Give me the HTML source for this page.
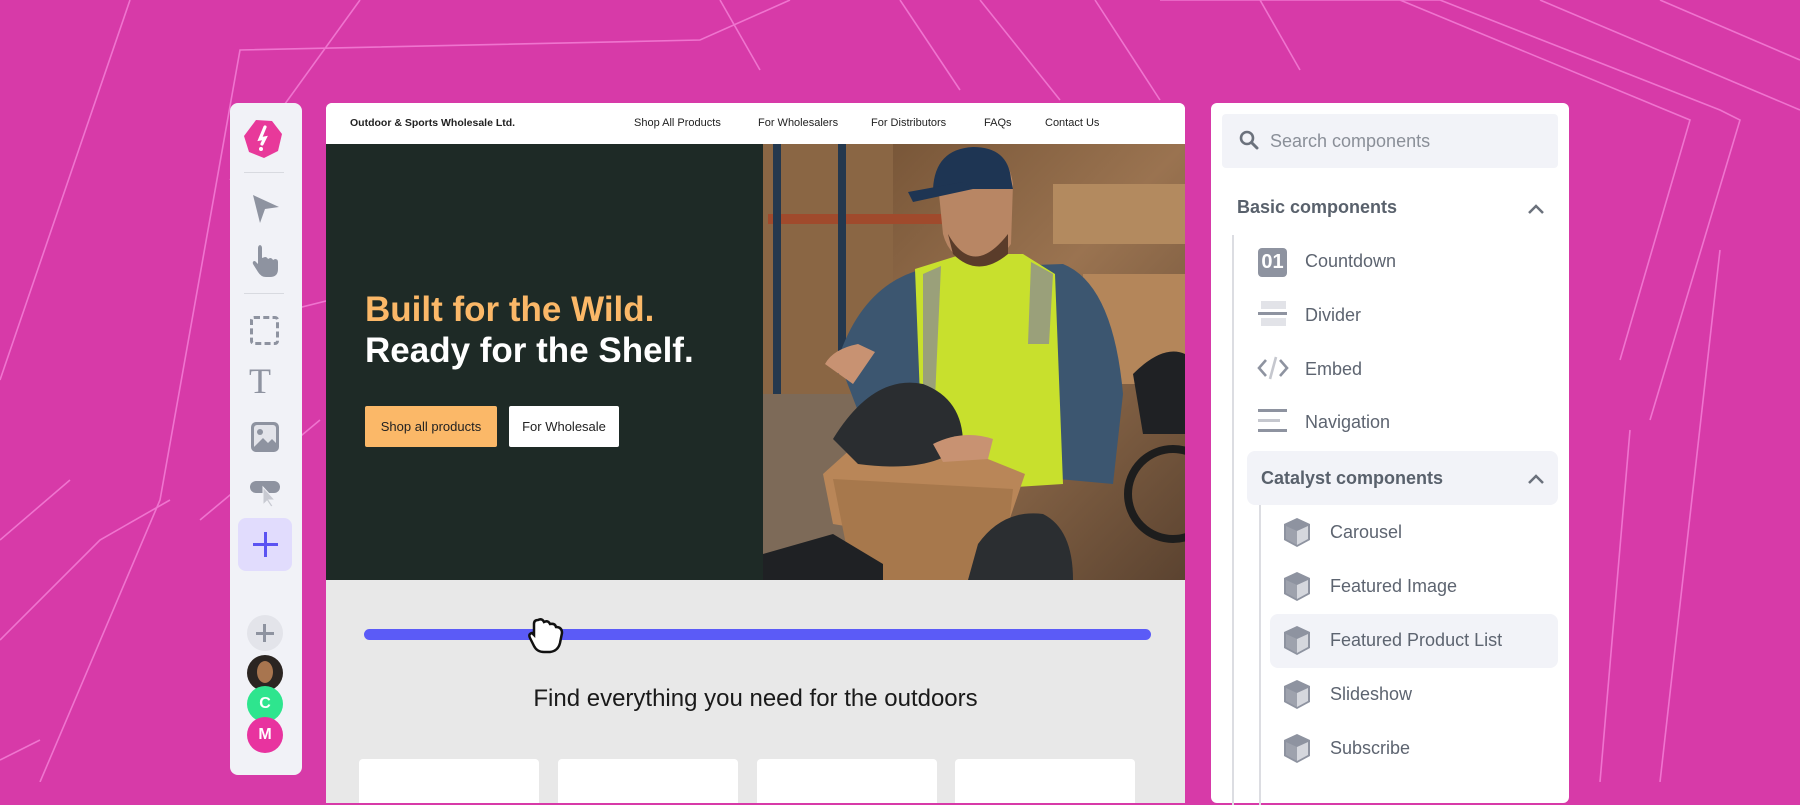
<!DOCTYPE html>
<html><head><meta charset="utf-8"><style>
*{margin:0;padding:0;box-sizing:border-box}
body{width:1800px;height:782px;overflow:hidden;background:#d73aa8;font-family:"Liberation Sans",sans-serif;position:relative}
.abs{position:absolute}
#bg{position:absolute;left:0;top:0}
.tool{position:absolute;left:230px;top:103px;width:72px;height:672px;background:#f1f2f7;border-radius:8px}
.canvas{position:absolute;left:326px;top:103px;width:859px;height:700px;background:#e8e8e8;border-radius:6px 6px 0 0;overflow:hidden}
.nav{height:41px;background:#fff;position:relative;font-size:11px;color:#222}
.nav span{position:absolute;top:14px}
.hero{position:absolute;top:41px;left:0;width:859px;height:436px;background:#1e2a26}
.panel{position:absolute;left:1211px;top:103px;width:358px;height:700px;background:#fff;border-radius:6px}
.item{position:absolute;font-size:18px;color:#5d6470}
.ic{position:absolute}
</style></head><body>
<svg id="bg" width="1800" height="782" fill="none" stroke="#f47fd6" stroke-width="1.6" opacity="0.85">
<polyline points="0,380 130,0"/>
<polyline points="40,782 160,500 240,50 700,40 790,0"/>
<polyline points="0,640 100,540 170,500"/>
<polyline points="0,540 70,480"/>
<polyline points="0,760 40,740"/>
<polyline points="1160,0 1440,0 1720,110 1740,120 1650,420"/>
<polyline points="1400,0 1690,120 1620,360"/>
<polyline points="1540,0 1800,110"/>
<polyline points="1660,0 1800,60"/>
<polyline points="1260,0 1300,70"/>
<polyline points="1630,430 1600,782"/>
<polyline points="1720,250 1660,782"/>
<polyline points="230,180 360,0"/>
<polyline points="200,520 320,420"/>
<polyline points="900,0 960,90"/>
<polyline points="980,0 1060,100"/>
<polyline points="720,0 760,70"/>
<polyline points="1095,0 1160,100"/>
<polyline points="250,320 330,300"/>
</svg>

<div class="tool">
 <svg class="ic" style="left:12px;top:15px" width="42" height="42" viewBox="0 0 42 42"><polygon points="14,2 30,3 40,16 36,33 22,40 7,34 2,18" fill="#e8399a"/><path d="M23 9 L18 21 L23 20 L20 26" stroke="#fff" stroke-width="3.2" fill="none" stroke-linecap="round"/><circle cx="19" cy="31" r="2" fill="#fff"/></svg>
 <div class="abs" style="left:14px;top:69px;width:40px;height:1px;background:#d8dae0"></div>
 <svg class="ic" style="left:21px;top:90px" width="30" height="32" viewBox="0 0 30 32"><path d="M2 2 L28 14 L14 16 L9 30 Z" fill="#8e93a0"/></svg>
 <svg class="ic" style="left:19px;top:140px" width="32" height="34" viewBox="0 0 32 34"><path d="M10 2 q3 0 3 3 v10 l3-1 q2 0 3 2 l2-1 q2 0 3 2 l2-1 q3 0 3 3 v7 q0 8-8 8 h-4 q-5 0-8-5 l-5-8 q-1-3 2-3 l3 3 V5 q0-3 3-3z" fill="#8e93a0"/></svg>
 <div class="abs" style="left:14px;top:190px;width:40px;height:1px;background:#d8dae0"></div>
 <div class="abs" style="left:20px;top:213px;width:29px;height:29px;border:3px dashed #8e93a0;border-radius:4px"></div>
 <div class="abs" style="left:19px;top:260px;font-family:'Liberation Serif',serif;font-size:36px;color:#8e93a0;line-height:36px">T</div>
 <svg class="ic" style="left:20px;top:318px" width="30" height="32" viewBox="0 0 30 32"><rect x="1" y="1" width="28" height="30" rx="5" fill="#8e93a0"/><rect x="4" y="4" width="22" height="24" rx="3" fill="#e3e4ea"/><circle cx="10" cy="11" r="3" fill="#8e93a0"/><path d="M4 26 L13 17 L18 22 L22 18 L26 22 V28 H4Z" fill="#8e93a0"/></svg>
 <svg class="ic" style="left:19px;top:376px" width="34" height="30" viewBox="0 0 34 30"><rect x="1" y="2" width="30" height="12" rx="6" fill="#8e93a0"/><path d="M14 8 L14 26 L18 22 L22 28 L24 27 L20 21 L26 21 Z" fill="#c8cad2" stroke="#f1f2f7" stroke-width="1"/></svg>
 <div class="abs" style="left:8px;top:415px;width:54px;height:53px;background:#e1dcfd;border-radius:8px"></div>
 <div class="abs" style="left:23px;top:440px;width:25px;height:3px;background:#5b53f2"></div>
 <div class="abs" style="left:34px;top:429px;width:3px;height:25px;background:#5b53f2"></div>
 <div class="abs" style="left:17px;top:512px;width:36px;height:36px;border-radius:50%;background:#e3e4ea"></div>
 <div class="abs" style="left:26px;top:529px;width:18px;height:3px;background:#8e93a0"></div>
 <div class="abs" style="left:33px;top:521px;width:3px;height:18px;background:#8e93a0"></div>
 <div class="abs" style="left:17px;top:552px;width:36px;height:36px;border-radius:50%;background:#2b2522;overflow:hidden"><div style="position:absolute;left:10px;top:6px;width:16px;height:22px;border-radius:50%;background:#a8754f"></div></div>
 <div class="abs" style="left:17px;top:583px;width:36px;height:36px;border-radius:50%;background:#2ee58e;color:#fff;font-weight:bold;font-size:16px;text-align:center;line-height:36px">C</div>
 <div class="abs" style="left:17px;top:614px;width:36px;height:36px;border-radius:50%;background:#e8339f;color:#fff;font-weight:bold;font-size:16px;text-align:center;line-height:36px">M</div>
</div>

<div class="canvas">
 <div class="nav">
  <span style="left:24px;font-weight:bold;font-size:10.5px">Outdoor &amp; Sports Wholesale Ltd.</span>
  <span style="left:308px">Shop All Products</span>
  <span style="left:432px">For Wholesalers</span>
  <span style="left:545px">For Distributors</span>
  <span style="left:658px">FAQs</span>
  <span style="left:719px">Contact Us</span>
 </div>
 <div class="hero">
  <div class="abs" style="left:39px;top:146px;font-size:35px;font-weight:bold;color:#fbb868">Built for the Wild.</div>
  <div class="abs" style="left:39px;top:187px;font-size:35px;font-weight:bold;color:#fff">Ready for the Shelf.</div>
  <div class="abs" style="left:39px;top:262px;width:132px;height:41px;background:#fbb868;border-radius:2px;font-size:13px;color:#222;text-align:center;line-height:41px">Shop all products</div>
  <div class="abs" style="left:183px;top:262px;width:110px;height:41px;background:#fff;border-radius:2px;font-size:13px;color:#222;text-align:center;line-height:41px">For Wholesale</div>
  <svg class="abs" style="left:437px;top:0" width="422" height="436" viewBox="0 0 422 436">
   <defs><linearGradient id="wg" x1="0" y1="0" x2="1" y2="1"><stop offset="0" stop-color="#6a4a2e"/><stop offset="0.5" stop-color="#9a7350"/><stop offset="1" stop-color="#5b4330"/></linearGradient></defs>
   <rect width="422" height="436" fill="url(#wg)"/>
   <rect x="0" y="0" width="130" height="260" fill="#8a6644"/>
   <rect x="5" y="70" width="180" height="10" fill="#a04a2c"/>
   <rect x="10" y="0" width="8" height="260" fill="#24384e"/>
   <rect x="75" y="0" width="8" height="230" fill="#24384e"/>
   <rect x="0" y="250" width="180" height="186" fill="#7d6a58"/>
   <rect x="290" y="40" width="132" height="60" fill="#b38a5f"/>
   <rect x="320" y="130" width="102" height="110" fill="#b4865a"/>
   <path d="M75 215 Q100 140 160 125 L300 120 Q350 140 360 250 L350 340 L240 330 L100 280 Z" fill="#3c5670"/>
   <path d="M152 125 L200 110 L260 110 L292 130 L300 340 L220 345 L160 330 Z" fill="#c8e02d"/>
   <path d="M160 130 L178 122 L170 300 L160 300Z" fill="#9aa07a"/>
   <path d="M268 118 L290 130 L286 200 L265 200Z" fill="#9aa07a"/>
   <path d="M175 40 Q175 10 215 5 Q245 5 250 40 L248 100 Q230 125 205 120 Q185 110 180 90 Z" fill="#b88664"/>
   <path d="M185 90 Q210 135 245 90 L245 110 Q215 135 190 110Z" fill="#5a3c2a"/>
   <path d="M170 45 Q172 5 210 3 Q245 3 248 35 L250 45 Z" fill="#1e3553"/>
   <path d="M145 48 L200 38 L210 45 L150 58Z" fill="#1e3553"/>
   <path d="M60 330 L110 285 L200 305 L262 330 L245 380 L160 395 L70 380 Z" fill="#b98658"/>
   <path d="M70 335 L90 436 L240 436 L250 345 Z" fill="#a7784c"/>
   <path d="M70 295 Q110 230 160 240 Q200 255 200 300 Q170 330 95 320 Z" fill="#2a2d30"/>
   <path d="M215 400 Q240 365 280 370 Q310 385 310 436 L205 436 Z" fill="#2b2e31"/>
   <path d="M0 410 L70 390 L120 420 L120 436 L0 436Z" fill="#1f2124"/>
   <circle cx="410" cy="350" r="45" fill="none" stroke="#1d1d1d" stroke-width="8"/>
   <path d="M370 230 Q400 200 422 210 L422 290 L380 290Z" fill="#1f2124"/>
   <path d="M62 220 Q70 205 95 200 L112 208 L90 240 Z" fill="#c89272"/>
   <path d="M170 300 Q200 285 230 295 L225 315 L180 318Z" fill="#c89272"/>
  </svg>
 </div>
 <div class="abs" style="left:38px;top:526px;width:787px;height:11px;border-radius:6px;background:#5b5bf7"></div>
 <svg class="abs" style="left:200px;top:513px" width="44" height="44" viewBox="0 0 44 44"><path d="M12 4 q4-2 6 2 q4-2 6 2 q5-1 6 3 q6 0 6 6 l-2 10 q-2 8-10 9 h-6 q-7 0-10-6 l-4-8 q-2-4 2-5 l2 2 V8 q0-4 4-4z" fill="#fff" stroke="#111" stroke-width="2.5"/></svg>
 <div class="abs" style="left:0;width:859px;top:582px;text-align:center;font-size:24px;color:#1a1a1a">Find everything you need for the outdoors</div>
 <div class="abs" style="left:33px;top:656px;width:180px;height:60px;background:#fff;border-radius:4px"></div>
 <div class="abs" style="left:232px;top:656px;width:180px;height:60px;background:#fff;border-radius:4px"></div>
 <div class="abs" style="left:431px;top:656px;width:180px;height:60px;background:#fff;border-radius:4px"></div>
 <div class="abs" style="left:629px;top:656px;width:180px;height:60px;background:#fff;border-radius:4px"></div>
</div>

<div class="panel">
 <div class="abs" style="left:11px;top:11px;width:336px;height:54px;background:#f2f3f8;border-radius:4px"></div>
 <svg class="abs" style="left:28px;top:27px" width="20" height="20" viewBox="0 0 20 20"><circle cx="8" cy="8" r="6" stroke="#6b717c" stroke-width="2.6" fill="none"/><path d="M12.5 12.5 L18 18" stroke="#6b717c" stroke-width="3" stroke-linecap="round"/></svg>
 <div class="item" style="left:59px;top:28px;color:#8a8f98">Search components</div>
 <div class="item" style="left:26px;top:94px;font-weight:bold;color:#59616c">Basic components</div>
 <svg class="abs" style="left:316px;top:100px" width="18" height="12"><path d="M2 10 L9 3 L16 10" stroke="#6b717c" stroke-width="2.5" fill="none"/></svg>
 <div class="abs" style="left:21px;top:132px;width:2px;height:570px;background:#dcdde2"></div>
 <div class="abs" style="left:47px;top:145px;width:29px;height:29px;background:#8e93a0;border-radius:4px;color:#fff;font-weight:bold;font-size:20px;text-align:center;line-height:29px">01</div>
 <div class="item" style="left:94px;top:148px">Countdown</div>
 <div class="abs" style="left:50px;top:198px;width:25px;height:8px;background:#e2e3e8"></div>
 <div class="abs" style="left:47px;top:209px;width:29px;height:3px;background:#8e93a0"></div>
 <div class="abs" style="left:50px;top:215px;width:25px;height:8px;background:#e2e3e8"></div>
 <div class="item" style="left:94px;top:202px">Divider</div>
 <svg class="abs" style="left:46px;top:252px" width="32" height="26"><path d="M9 5 L2 13 L9 21 M23 5 L30 13 L23 21" stroke="#8e93a0" stroke-width="2.6" fill="none"/><path d="M19 2 L13 24" stroke="#c5c7ce" stroke-width="2.6"/></svg>
 <div class="item" style="left:94px;top:256px">Embed</div>
 <div class="abs" style="left:47px;top:306px;width:29px;height:3px;background:#8e93a0"></div>
 <div class="abs" style="left:47px;top:316px;width:22px;height:3px;background:#c5c7ce"></div>
 <div class="abs" style="left:47px;top:326px;width:29px;height:3px;background:#8e93a0"></div>
 <div class="item" style="left:94px;top:309px">Navigation</div>
 <div class="abs" style="left:36px;top:348px;width:311px;height:54px;background:#f2f3f8;border-radius:8px"></div>
 <div class="item" style="left:50px;top:365px;font-weight:bold;color:#59616c">Catalyst components</div>
 <svg class="abs" style="left:316px;top:370px" width="18" height="12"><path d="M2 10 L9 3 L16 10" stroke="#6b717c" stroke-width="2.5" fill="none"/></svg>
 <div class="abs" style="left:48px;top:402px;width:2px;height:300px;background:#dcdde2"></div>
 <div class="abs" style="left:59px;top:511px;width:288px;height:54px;background:#f2f3f8;border-radius:8px"></div>
 <svg width="0" height="0" style="position:absolute"><defs><g id="cube"><path d="M15 1 L28 7 L28 23 L15 30 L2 23 L2 7Z" fill="#8e93a0"/><path d="M15 14 L26 9 L26 22 L15 28Z" fill="#d5d7dd"/><path d="M4 9 L15 14 L15 28 L4 22Z" fill="#9ea2ad"/></g></defs></svg>
 <svg class="abs" style="left:71px;top:414px" width="30" height="31"><use href="#cube"/></svg>
 <div class="item" style="left:119px;top:419px">Carousel</div>
 <svg class="abs" style="left:71px;top:468px" width="30" height="31"><use href="#cube"/></svg>
 <div class="item" style="left:119px;top:473px">Featured Image</div>
 <svg class="abs" style="left:71px;top:522px" width="30" height="31"><use href="#cube"/></svg>
 <div class="item" style="left:119px;top:527px">Featured Product List</div>
 <svg class="abs" style="left:71px;top:576px" width="30" height="31"><use href="#cube"/></svg>
 <div class="item" style="left:119px;top:581px">Slideshow</div>
 <svg class="abs" style="left:71px;top:630px" width="30" height="31"><use href="#cube"/></svg>
 <div class="item" style="left:119px;top:635px">Subscribe</div>
</div>
</body></html>
